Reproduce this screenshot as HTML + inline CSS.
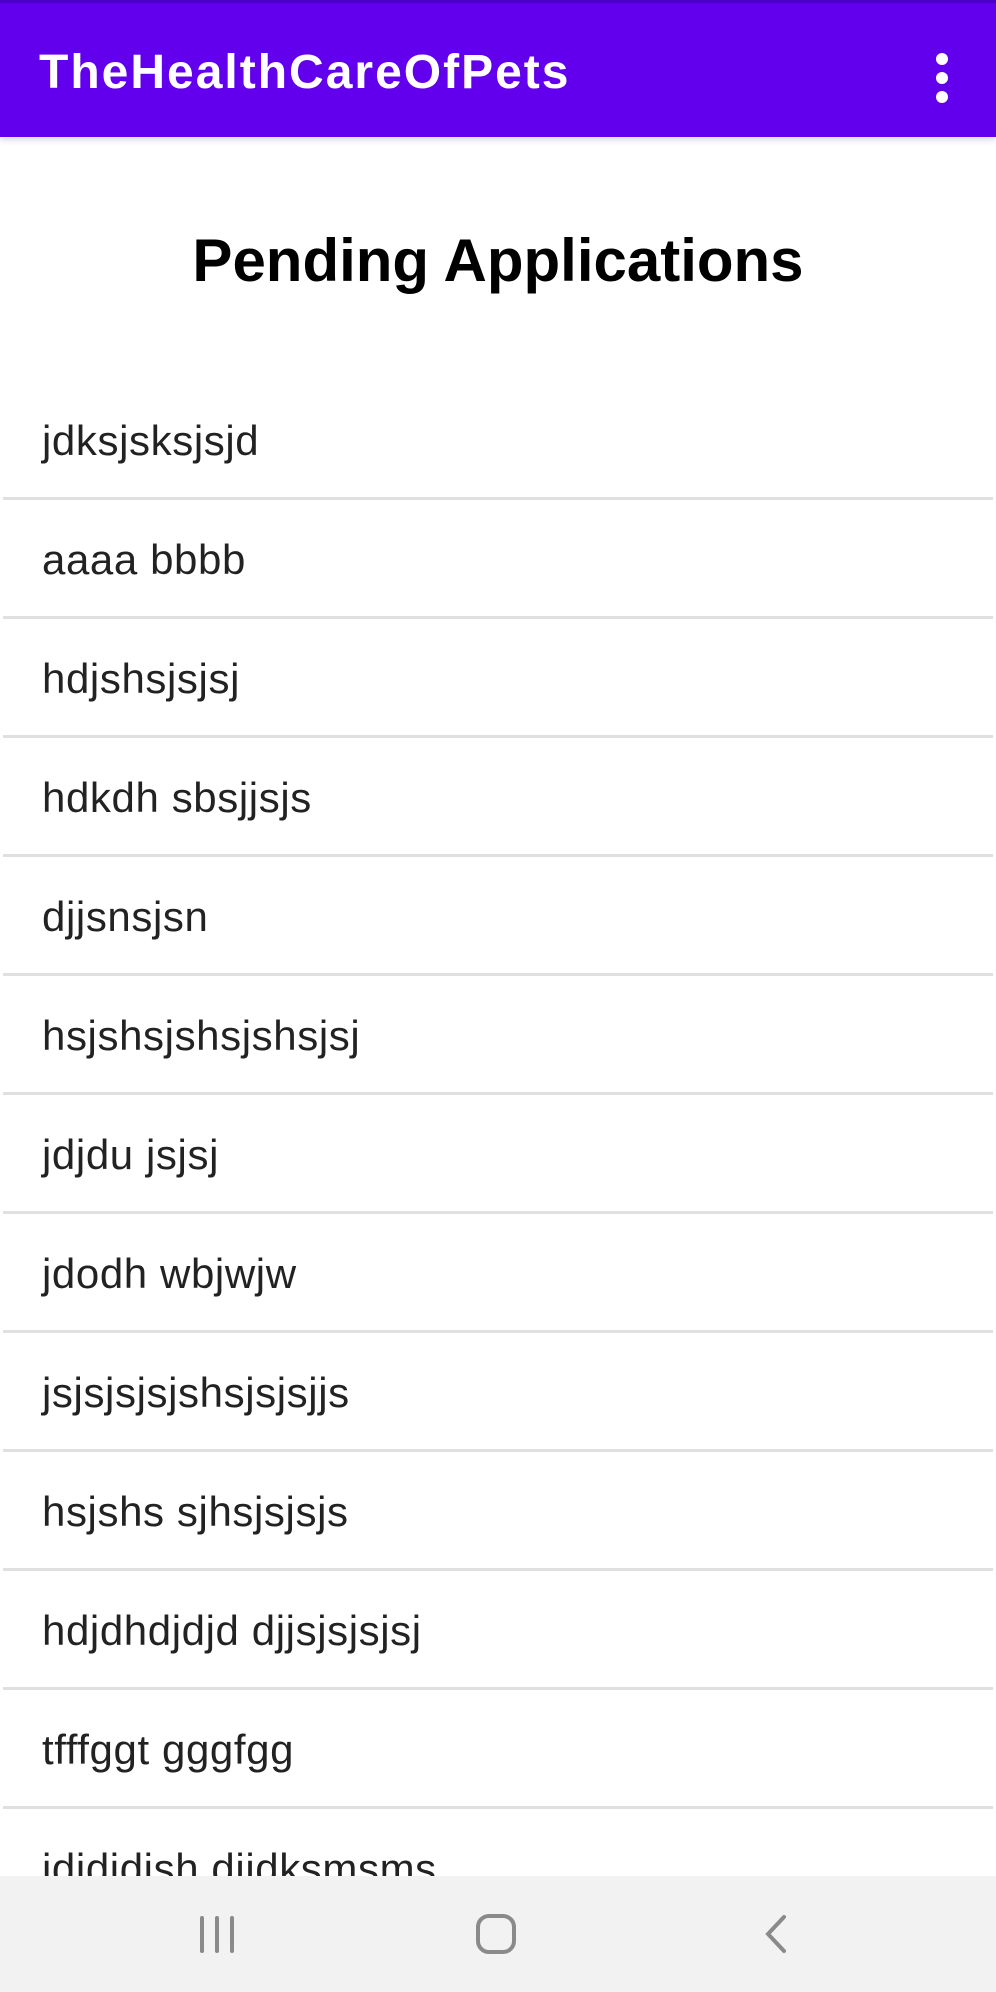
<!DOCTYPE html>
<html><head><meta charset="utf-8"><style>
*{margin:0;padding:0;box-sizing:border-box}
body{width:996px;height:1992px;background:#fff;font-family:"Liberation Sans",sans-serif;position:relative;overflow:hidden}
.bar{position:absolute;left:0;top:0;width:996px;height:137px;background:#6200ee;border-top:3px solid #4a00c8;box-shadow:0 3px 6px rgba(0,0,0,.15)}
.bar .t{position:absolute;left:39px;top:42px;color:#fff;font-size:48px;font-weight:bold;letter-spacing:2px}
.dots{position:absolute;left:936px;top:50px}
.dots i{display:block;width:12px;height:12px;border-radius:50%;background:#fff;margin-bottom:7px}
h1{position:absolute;left:0;width:996px;top:226px;text-align:center;font-size:60px;font-weight:bold;color:#000}
.item{position:absolute;left:42px;font-size:42px;letter-spacing:0.6px;color:#222;line-height:40px}
.sep{position:absolute;left:3px;width:990px;height:3px;background:#e0e0e0}
.nav{position:absolute;left:0;top:1876px;width:996px;height:116px;background:#f2f2f2}
</style></head><body>
<div class="bar"><div class="t">TheHealthCareOfPets</div><div class="dots"><i></i><i></i><i></i></div></div>
<h1>Pending Applications</h1>

<div class="item" style="top:421px">jdksjsksjsjd</div><div class="sep" style="top:497px"></div>
<div class="item" style="top:540px">aaaa bbbb</div><div class="sep" style="top:616px"></div>
<div class="item" style="top:659px">hdjshsjsjsj</div><div class="sep" style="top:735px"></div>
<div class="item" style="top:778px">hdkdh sbsjjsjs</div><div class="sep" style="top:854px"></div>
<div class="item" style="top:897px">djjsnsjsn</div><div class="sep" style="top:973px"></div>
<div class="item" style="top:1016px">hsjshsjshsjshsjsj</div><div class="sep" style="top:1092px"></div>
<div class="item" style="top:1135px">jdjdu jsjsj</div><div class="sep" style="top:1211px"></div>
<div class="item" style="top:1254px">jdodh wbjwjw</div><div class="sep" style="top:1330px"></div>
<div class="item" style="top:1373px">jsjsjsjsjshsjsjsjjs</div><div class="sep" style="top:1449px"></div>
<div class="item" style="top:1492px">hsjshs sjhsjsjsjs</div><div class="sep" style="top:1568px"></div>
<div class="item" style="top:1611px">hdjdhdjdjd djjsjsjsjsj</div><div class="sep" style="top:1687px"></div>
<div class="item" style="top:1730px">tfffggt gggfgg</div><div class="sep" style="top:1806px"></div>
<div class="item" style="top:1849px">jdjdjdjsh djjdksmsms</div>

<div class="nav">
<svg width="996" height="116" style="position:absolute;left:0;top:0">
<g stroke="#8a8a8a" stroke-width="4" fill="none" stroke-linecap="round">
<line x1="202" y1="42" x2="202" y2="75"/><line x1="217" y1="42" x2="217" y2="75"/><line x1="232" y1="42" x2="232" y2="75"/>
<rect x="478" y="40" width="36" height="36" rx="11"/>
<polyline points="784,41 768,58 784,75"/>
</g></svg>
</div>
</body></html>
